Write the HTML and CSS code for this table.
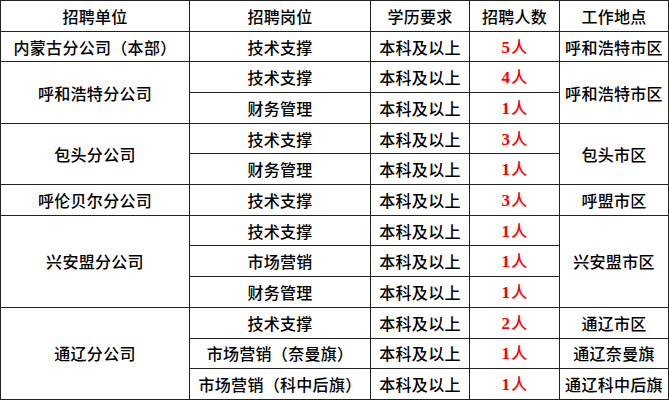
FILE: index.html
```html
<!DOCTYPE html>
<html lang="zh">
<head>
<meta charset="utf-8">
<link rel="stylesheet" href="styles.css">
</head>
<body>
<table class="jobs">
  <colgroup>
    <col class="c1"><col class="c2"><col class="c3"><col class="c4"><col class="c5">
  </colgroup>
  <thead>
    <tr><th>招聘单位</th><th>招聘岗位</th><th>学历要求</th><th>招聘人数</th><th>工作地点</th></tr>
  </thead>
  <tbody>
    <tr><td>内蒙古分公司（本部）</td><td>技术支撑</td><td>本科及以上</td><td class="num"><span class="d">5</span>人</td><td>呼和浩特市区</td></tr>
    <tr><td rowspan="2">呼和浩特分公司</td><td>技术支撑</td><td>本科及以上</td><td class="num"><span class="d">4</span>人</td><td rowspan="2">呼和浩特市区</td></tr>
    <tr><td>财务管理</td><td>本科及以上</td><td class="num"><span class="d">1</span>人</td></tr>
    <tr><td rowspan="2">包头分公司</td><td>技术支撑</td><td>本科及以上</td><td class="num"><span class="d">3</span>人</td><td rowspan="2">包头市区</td></tr>
    <tr><td>财务管理</td><td>本科及以上</td><td class="num"><span class="d">1</span>人</td></tr>
    <tr><td>呼伦贝尔分公司</td><td>技术支撑</td><td>本科及以上</td><td class="num"><span class="d">3</span>人</td><td>呼盟市区</td></tr>
    <tr><td rowspan="3">兴安盟分公司</td><td>技术支撑</td><td>本科及以上</td><td class="num"><span class="d">1</span>人</td><td rowspan="3">兴安盟市区</td></tr>
    <tr><td>市场营销</td><td>本科及以上</td><td class="num"><span class="d">1</span>人</td></tr>
    <tr><td>财务管理</td><td>本科及以上</td><td class="num"><span class="d">1</span>人</td></tr>
    <tr><td rowspan="3">通辽分公司</td><td>技术支撑</td><td>本科及以上</td><td class="num"><span class="d">2</span>人</td><td>通辽市区</td></tr>
    <tr><td>市场营销（奈曼旗）</td><td>本科及以上</td><td class="num"><span class="d">1</span>人</td><td>通辽奈曼旗</td></tr>
    <tr><td>市场营销（科中后旗）</td><td>本科及以上</td><td class="num"><span class="d">1</span>人</td><td>通辽科中后旗</td></tr>
  </tbody>
</table>
</body>
</html>
```
FILE: styles.css
```css
html, body {
  margin: 0;
  padding: 0;
  background: #ffffff;
}
.jobs {
  border-collapse: collapse;
  table-layout: fixed;
  width: 668px;
  height: 400px;
  font-family: "Noto Sans CJK SC", "Noto Sans", sans-serif;
  font-size: 16px;
  color: #000000;
}
.c1 { width: 189px; }
.c2 { width: 181px; }
.c3 { width: 99px; }
.c4 { width: 90px; }
.c5 { width: 109px; }
.jobs tr {
  height: 30.67px;
}
.jobs th, .jobs td {
  border: 1px solid #222222;
  padding: 0;
  text-align: center;
  vertical-align: middle;
  white-space: nowrap;
  overflow: hidden;
  line-height: 20px;
  font-weight: 500;
  letter-spacing: 0.3px;
}
.num {
  color: #ff0000;
}
.d {
  font-family: "Liberation Serif", serif;
  font-weight: bold;
  font-size: 17px;
  margin-right: 1px;
}
```
